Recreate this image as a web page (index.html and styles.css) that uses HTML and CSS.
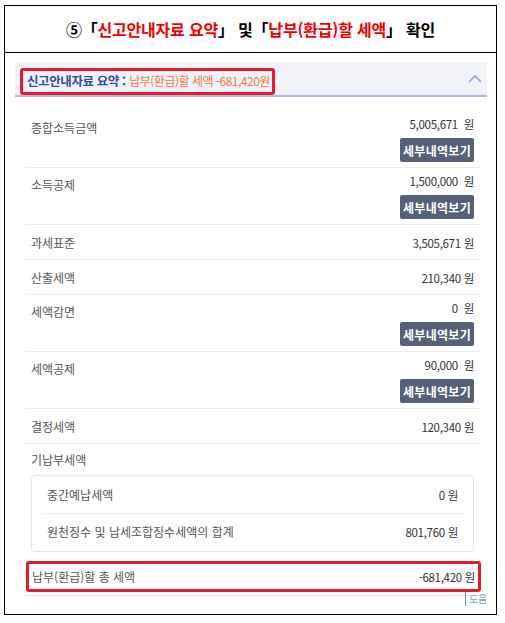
FILE: index.html
```html
<!DOCTYPE html>
<html lang="ko">
<head>
  <meta charset="UTF-8">
  <meta name="viewport" content="width=device-width, initial-scale=1.0">
  <title>신고안내자료 요약</title>
  <link rel="stylesheet" href="styles.css">
</head>
<body>
  <div class="frame">
    <h1 class="title">⑤「<span class="red">신고안내자료 요약</span>」 및「<span class="red">납부(환급)할 세액</span>」 확인</h1>

    <div class="panel">
      <div class="panel-head">
        <div class="head-box">
          <span class="head-label">신고안내자료 요약 :</span>
          <span class="head-value">납부(환급)할 세액 -681,420원</span>
        </div>
        <svg class="chevron" width="14" height="9" viewBox="0 0 14 9">
          <polyline points="1,8 7,2 13,8" fill="none" stroke="#8fa6d0" stroke-width="1.6"/>
        </svg>
      </div>

      <div class="panel-body">
        <div class="row row-btn">
          <span class="label">종합소득금액</span>
          <div class="value-col">
            <span class="value">5,005,671 &nbsp;원</span>
            <button class="detail-btn">세부내역보기</button>
          </div>
        </div>
        <div class="row row-btn">
          <span class="label">소득공제</span>
          <div class="value-col">
            <span class="value">1,500,000 &nbsp;원</span>
            <button class="detail-btn">세부내역보기</button>
          </div>
        </div>
        <div class="row">
          <span class="label">과세표준</span>
          <span class="value">3,505,671 원</span>
        </div>
        <div class="row">
          <span class="label">산출세액</span>
          <span class="value">210,340 원</span>
        </div>
        <div class="row row-btn">
          <span class="label">세액감면</span>
          <div class="value-col">
            <span class="value">0 &nbsp;원</span>
            <button class="detail-btn">세부내역보기</button>
          </div>
        </div>
        <div class="row row-btn">
          <span class="label">세액공제</span>
          <div class="value-col">
            <span class="value">90,000 &nbsp;원</span>
            <button class="detail-btn">세부내역보기</button>
          </div>
        </div>
        <div class="row">
          <span class="label">결정세액</span>
          <span class="value">120,340 원</span>
        </div>

        <div class="prepaid">
          <div class="label">기납부세액</div>
          <div class="sub-box">
            <div class="sub-row">
              <span class="label">중간예납세액</span>
              <span class="value">0 원</span>
            </div>
            <div class="sub-row">
              <span class="label">원천징수 및 납세조합징수세액의 합계</span>
              <span class="value">801,760 원</span>
            </div>
          </div>
        </div>

        <div class="total-wrap">
          <div class="total">
            <span class="label">납부(환급)할 총 세액</span>
            <span class="value">-681,420 원</span>
          </div>
        </div>
        <div class="help"><span>도움</span></div>
      </div>
    </div>
  </div>
</body>
</html>
```

FILE: styles.css
```css
*{
    margin: 0;
    padding: 0;
    box-sizing: border-box;
}
body{
    background: #fff;
    font-family: "Noto Sans CJK KR", "Noto Sans", sans-serif;
}
.frame{
    width: 493px;
    height: 610px;
    margin: 5px 0 0 4px;
    border: 1px solid #000;
    overflow: hidden;
}
.title{
    height: 47px;
    border-bottom: 1px solid #000;
    font-size: 16px;
    font-weight: 700;
    line-height: 46px;
    text-align: center;
    color: #000;
    letter-spacing: -0.2px;
}
.red{
    color: #ee0000;
}
.panel{
    margin: 9px 9px 0 10px;
    overflow: hidden;
    height: 545px;
}
.panel-head{
    height: 35px;
    background: #f1f3f9;
    border-bottom: 2px solid #a9bde0;
    display: flex;
    align-items: center;
    justify-content: space-between;
    padding: 0 5px 0 5px;
}
.head-box{
    border: 3px solid #e8192a;
    border-radius: 3px;
    height: 27px;
    width: 255px;
    margin-top: 6px;
    padding-left: 4px;
    font-size: 12.5px;
    line-height: 20px;
    white-space: nowrap;
    overflow: hidden;
}
.head-label{
    color: #2f4f9c;
    font-weight: 700;
    letter-spacing: -0.4px;
}
.head-value{
    color: #f27a3c;
    font-size: 12px;
    letter-spacing: -0.5px;
}
.panel-body{
    padding: 14px 0 0 10px;
    position: relative;
}
.row{
    display: flex;
    justify-content: space-between;
    align-items: flex-start;
    width: 455px;
    padding: 10px 6px 8px 6px;
    border-bottom: 1px solid #e9ebf0;
    font-size: 12px;
    line-height: 16px;
}
.row-btn{
    padding: 5px 6px 5px 6px;
}
.row-btn > .label{
    margin-top: 4px;
}
.label{
    color: #555;
}
.value{
    color: #333;
    font-size: 11.5px;
    letter-spacing: -0.3px;
}
.value-col{
    display: flex;
    flex-direction: column;
    align-items: flex-end;
    gap: 6px;
}
.detail-btn{
    width: 74px;
    height: 24px;
    border: none;
    border-radius: 2px;
    background: #566178;
    color: #fff;
    font-family: inherit;
    font-size: 12px;
    font-weight: 700;
    letter-spacing: 0.3px;
}
.prepaid{
    width: 455px;
    padding: 8px 6px 0 6px;
    font-size: 12px;
    line-height: 16px;
}
.sub-box{
    margin-top: 7px;
    height: 77px;
    border: 1px solid #e3e5eb;
    border-radius: 4px;
    padding: 0 9px;
}
.sub-row{
    display: flex;
    justify-content: space-between;
    align-items: center;
    height: 37px;
    padding: 0 6px;
}
.sub-row + .sub-row{
    border-top: 1px solid #e9ebf0;
}
.total-wrap{
    width: 461px;
    margin-top: 9px;
    padding-bottom: 3px;
    border-bottom: 1px solid #dfe3ea;
}
.total{
    display: flex;
    justify-content: space-between;
    align-items: center;
    width: 455px;
    height: 31px;
    margin-left: 1px;
    border: 3px solid #e8192a;
    border-radius: 3px;
    padding: 0 3px 0 3px;
    font-size: 12px;
}
.help{
    display: flex;
    justify-content: flex-end;
    width: 461px;
}
.help span{
    display: block;
    width: 21px;
    margin-top: -4px;
    padding-left: 3px;
    border-left: 1px solid #6b8cc8;
    font-size: 10px;
    line-height: 14px;
    color: #8a9ac0;
    overflow: hidden;
    white-space: nowrap;
}
```
